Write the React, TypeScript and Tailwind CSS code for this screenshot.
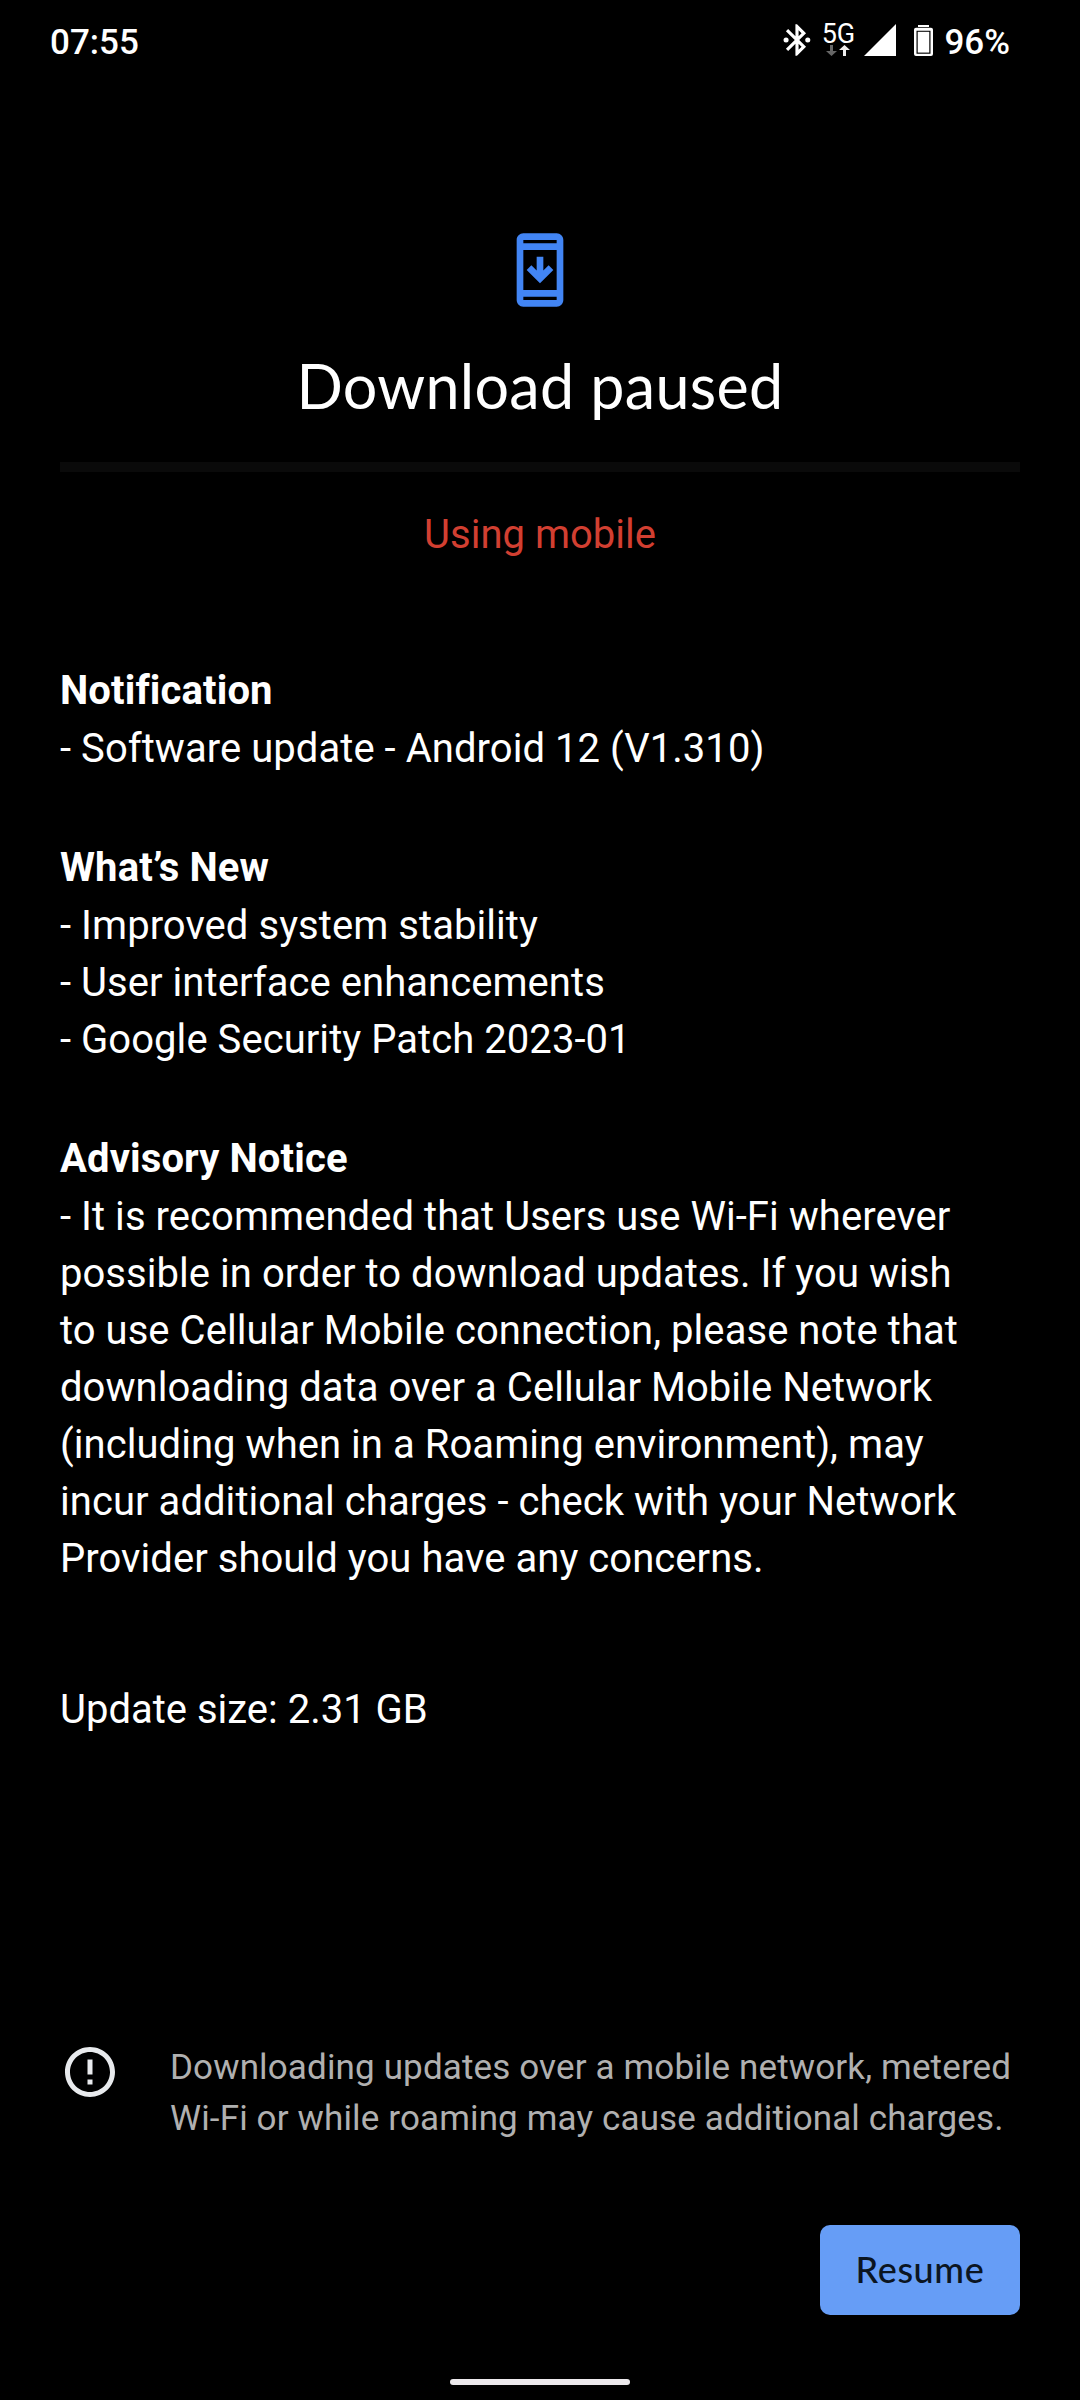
const sections = [
  {
    title: "Notification",
    lines: ["- Software update - Android 12 (V1.310)"],
  },
  {
    title: "What’s New",
    lines: [
      "- Improved system stability",
      "- User interface enhancements",
      "- Google Security Patch 2023-01",
    ],
  },
  {
    title: "Advisory Notice",
    lines: [
      "- It is recommended that Users use Wi-Fi wherever possible in order to download updates. If you wish to use Cellular Mobile connection, please note that downloading data over a Cellular Mobile Network (including when in a Roaming environment), may incur additional charges - check with your Network Provider should you have any concerns.",
    ],
  },
]

const StatusBar = () => (
  <header className="flex h-[80px] items-start justify-between pl-[50px] pr-[70px] pt-5 text-white">
    <span className="mt-px text-[35px] font-medium leading-[43px]">07:55</span>

    <div className="flex items-start">
      {/* Bluetooth */}
      <svg className="mt-px h-[38px] w-[38px]" viewBox="0 0 24 24" fill="currentColor">
        <path d="M17.71 7.71L12 2h-1v7.59L6.41 5 5 6.41 10.59 12 5 17.59 6.41 19 11 14.41V22h1l5.71-5.71-4.3-4.29 4.3-4.29zM13 5.83l1.88 1.88L13 9.59V5.83zm1.88 10.46L13 18.17v-3.76l1.88 1.88z" />
        <circle cx="5.1" cy="12" r="1.6" />
        <circle cx="18.8" cy="12" r="1.6" />
      </svg>

      {/* Network type with data activity */}
      <div className="ml-[5px] flex w-[34px] flex-col items-center">
        <span className="h-[25px] text-[27px] leading-[29px]">5G</span>
        <svg className="h-[11px] w-[26px]" viewBox="0 0 26 11">
          <path d="M5 0h3v6h4l-5.5 5L1 6h4z" fill="#666" />
          <path d="M18 11h3V5h4l-5.500-5L14 5h4z" fill="#eee" />
        </svg>
      </div>

      {/* Signal */}
      <svg className="ml-[9px] mt-1 h-8 w-8" viewBox="0 0 32 32" fill="currentColor">
        <path d="M32 0v32H0z" />
      </svg>

      {/* Battery */}
      <svg className="ml-[18px] mt-[5px] h-[31px] w-[19px]" viewBox="0 0 19 31" fill="currentColor">
        <path d="M4 0h11v2H4z" />
        <path
          fillRule="evenodd"
          d="M2 2.700h15a2 2 0 0 1 2 2V29a2 2 0 0 1-2 2H2a2 2 0 0 1-2-2V4.700a2 2 0 0 1 2-2zM2.500 5.700v23h14v-23z"
        />
        <path d="M3.700 6.800h11.600v20.800H3.700z" />
      </svg>

      <span className="ml-[11px] mt-px text-[35px] font-medium leading-[43px]">96%</span>
    </div>
  </header>
)

export default function App() {
  return (
    <div className="flex h-[2400px] w-[1080px] flex-col bg-black font-[Roboto,sans-serif] text-white">
      <StatusBar />

      <main className="flex flex-col px-[60px] pt-[150px]">
        <svg className="h-20 w-20 self-center" viewBox="0 0 24 24" fill="#4285f4">
          <path
            fillRule="evenodd"
            d="M17 1H7C5.900 1 5 1.900 5 3v18c0 1.100.9 2 2 2h10c1.100 0 2-.9 2-2V3c0-1.100-.9-2-2-2zM7 3h10v1H7zM7 6h10v12H7zM7 20h10v1H7z"
          />
          <path d="M16 12l-1.410-1.410L13 12.170V8h-2v4.170l-1.590-1.580L8 12l4 4 4-4z" />
        </svg>

        <h1 className="mt-10 text-center font-[Lato,sans-serif] text-[61px] leading-[72px] tracking-[0.3px]">
          Download paused
        </h1>

        <div className="mt-10 h-[10px] bg-[#0a0a0a]" />

        <p className="mt-[34px] text-center text-[40px] leading-[57px] text-[#d23f31]">Using mobile</p>

        <div className="mt-[99px] flex flex-col gap-[62px] text-[40px] leading-[57px] tracking-[0.05px]">
          {sections.map((section) => (
            <section key={section.title} className="w-[920px]">
              <h2 className="h-[58px] font-bold tracking-[0.12px]">{section.title}</h2>
              {section.lines.map((line) => (
                <p key={line}>{line}</p>
              ))}
            </section>
          ))}
        </div>

        <p className="mt-[94px] text-[40px] leading-[57px]">Update size: 2.31 GB</p>

        {/* Data charges warning */}
        <div className="mt-[304px] flex">
          <svg className="h-[60px] w-[60px]" viewBox="0 0 24 24" fill="#e8eaed">
            <path d="M11 15h2v2h-2zm0-8h2v6h-2zm.99-5C6.470 2 2 6.480 2 12s4.470 10 9.990 10C17.520 22 22 17.520 22 12S17.520 2 11.990 2zM12 20c-4.420 0-8-3.580-8-8s3.580-8 8-8 8 3.580 8 8-3.580 8-8 8z" />
          </svg>
          <p className="ml-[50px] whitespace-nowrap text-[35px] leading-[51px] tracking-[0.14px] text-[#b0b0b0]">
            Downloading updates over a mobile network, metered
            <br />
            Wi-Fi or while roaming may cause additional charges.
          </p>
        </div>

        <button className="mt-[81px] h-[90px] w-[200px] self-end rounded-[10px] bg-[#669df6] pb-[3px] font-[Lato,sans-serif] text-[36px] font-medium tracking-[0.6px] text-[#0b1522]">
          Resume
        </button>
      </main>

      {/* Gesture handle */}
      <div className="mt-16 h-[6px] w-[180px] self-center rounded-full bg-[#ece9ec]" />
    </div>
  )
}
